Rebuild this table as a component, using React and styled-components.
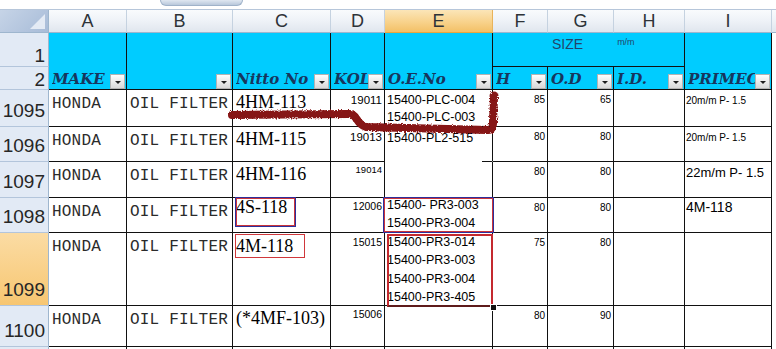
import React from 'react';
import styled, { createGlobalStyle, css } from 'styled-components';

const GlobalStyle = createGlobalStyle`
  html, body { margin: 0; padding: 0; background: #fff; }
  body { overflow: hidden; }
`;

const Page = styled.div`
  position: relative;
  width: 776px;
  height: 349px;
  overflow: hidden;
  background: #fff;
  font-family: "Liberation Sans", Arial, sans-serif;
`;

const Ribbon = styled.div`
  box-sizing: border-box;
  height: 10px;
  padding-left: 160px;
  border-bottom: 1px solid #b6c6da;
  display: flex;
  align-items: flex-start;
`;

const RibbonTab = styled.div`
  box-sizing: border-box;
  width: 83px;
  height: 6px;
  border: 1px solid #9fb2c9;
  border-top: none;
  border-radius: 0 0 6px 6px;
  background: linear-gradient(#dfe7f1, #b9c8db);
`;

const Sheet = styled.div`
  display: grid;
  grid-template-columns: 49px 78px 106px 98px 54px 108px 55px 66px 71px 87px 40px;
  grid-template-rows: 23px 34px 23px 37px 35px 36px 35px 73px 41px 30px;
`;

const Corner = styled.div`
  box-sizing: border-box;
  background: linear-gradient(135deg, #c6d4e7, #a8bcd8);
  border-right: 1px solid #9eb6ce;
  border-bottom: 1px solid #9eb6ce;
  display: flex;
  align-items: flex-end;
  justify-content: flex-end;
  padding: 0 3px 3px 0;
  &::after {
    content: '';
    border-left: 15px solid transparent;
    border-bottom: 15px solid #e4ebf5;
  }
`;

const ColHead = styled.div`
  box-sizing: border-box;
  border-right: 1px solid ${p => (p.$active ? '#e9b35a' : '#c5d2e0')};
  border-bottom: 1px solid ${p => (p.$active ? '#eaa63e' : '#9eb6ce')};
  background: ${p =>
    p.$active
      ? 'linear-gradient(#fbe5b8, #f8d48f 50%, #f3c066)'
      : 'linear-gradient(#f9fbfd, #eef2f7 50%, #e0e6ee)'};
  display: flex;
  align-items: center;
  justify-content: center;
  font: 18px/1 "Liberation Sans", Arial, sans-serif;
  color: #2e3338;
`;

const Band = styled.div`
  box-sizing: border-box;
  min-width: 0;
  grid-row: span ${p => p.$rows || 1};
  grid-column: span ${p => p.$cols || 1};
  background: #00ccff;
  border-right: 1px solid #111;
  border-bottom: 1px solid #111;
  display: flex;
  align-items: flex-end;
  padding: 0 1px 0 3px;
`;

const SizeBand = styled(Band)`
  align-items: flex-start;
  padding: 4px 0 0 59px;
  color: #234469;
`;

const SizeText = styled.span`
  font: 14px/1 "Liberation Sans", Arial, sans-serif;
`;

const UnitText = styled.span`
  margin-left: 34px;
  padding-top: 1px;
  font: 9px/1 "Liberation Sans", Arial, sans-serif;
`;

const BlankBand = styled.div`
  grid-row: span 2;
  background: #fff;
`;

const Label = styled.span`
  flex: 1;
  min-width: 0;
  overflow: hidden;
  white-space: nowrap;
  margin-bottom: 1px;
  font: italic bold 15px/17px "DejaVu Serif", "Liberation Serif", serif;
  color: #17365d;
`;

const Filter = styled.span`
  flex: none;
  box-sizing: border-box;
  width: 15px;
  height: 15px;
  border: 1px solid #b3b3b3;
  background: linear-gradient(#fefefe, #d8d8d8);
  display: flex;
  align-items: center;
  justify-content: center;
  &::after {
    content: '';
    margin-top: 2px;
    border-left: 3px solid transparent;
    border-right: 3px solid transparent;
    border-top: 3px solid #1e1e1e;
  }
`;

const RowHead = styled.div`
  box-sizing: border-box;
  background: ${p => (p.$active ? 'linear-gradient(#fbdca4, #f7c671)' : '#e2eaf5')};
  border-right: 1px solid #9eb6ce;
  border-bottom: 1px solid #b3c5db;
  display: flex;
  align-items: flex-end;
  justify-content: flex-end;
  padding: 0 3px ${p => p.$pb}px 0;
  font: 19px/19px "Liberation Sans", Arial, sans-serif;
  color: #262626;
`;

const Cell = styled.div`
  position: relative;
  box-sizing: border-box;
  min-width: 0;
  border-right: 1px solid #111;
  border-bottom: 1px solid ${p => (p.$open ? 'transparent' : '#111')};
  padding: ${p => p.$pt || 0}px ${p => p.$pr ?? 2}px 0 ${p => p.$pl ?? 3}px;
  text-align: ${p => (p.$right ? 'right' : 'left')};
  white-space: nowrap;
  color: #000;
  ${p =>
    p.$stub &&
    css`
      &::after {
        content: '';
        position: absolute;
        right: 0;
        bottom: -1px;
        width: 10px;
        height: 1px;
        background: #111;
      }
    `}
`;

const Spill = styled.div`
  background: #fff;
`;

const Mono = styled.div`
  font: 16px/16px "Liberation Mono", "Courier New", monospace;
  letter-spacing: 0.2px;
  color: #2b2b2b;
`;

const Roman = styled.div`
  font: 18px/18px "Liberation Serif", "Times New Roman", serif;
`;

const Small = styled.div`
  font: ${p => p.$size}px/1 "Liberation Sans", Arial, sans-serif;
`;

const Lines = styled.div`
  margin-top: ${p => p.$mt || 0}px;
  font: 12.5px/${p => p.$lh}px "Liberation Sans", Arial, sans-serif;
`;

const Mark = styled.div`
  position: absolute;
  z-index: 2;
  box-sizing: border-box;
  pointer-events: none;
  left: ${p => p.$x}px;
  top: ${p => p.$y}px;
  width: ${p => p.$w}px;
  height: ${p => p.$h}px;
  ${p =>
    p.$kind === 'double'
      ? css`
          border: 1px solid #2d2f9b;
          box-shadow: inset 0 0 0 1px #c9343b;
        `
      : p.$kind === 'heavy'
      ? css`
          border: 2px solid #c4292f;
          border-bottom-color: #5e1b1b;
        `
      : css`
          border: 1px solid #d0373b;
        `}
`;

const Handle = styled.span`
  position: absolute;
  right: -6px;
  bottom: -6px;
  width: 5px;
  height: 5px;
  background: #111;
  border: 1px solid #fff;
`;

const Ink = styled.svg`
  position: absolute;
  left: 0;
  top: 0;
  z-index: 5;
  pointer-events: none;
`;

const COLS = ['A', 'B', 'C', 'D', 'E', 'F', 'G', 'H', 'I'];

function HeadLabel({ text, filter = true }) {
  return (
    <>
      <Label>{text}</Label>
      {filter && <Filter />}
    </>
  );
}

function DataRow({
  num,
  active,
  model,
  modelPt = 3.2,
  modelMark,
  kol,
  kolSize = 10.5,
  kolPt = 3,
  oe = [],
  oeLh = 17,
  oePt = 2,
  oeMt,
  oeOpen,
  oeStub,
  oeMark,
  h,
  od,
  prime,
  primeSize = 10,
  primePt = 6,
}) {
  return (
    <>
      <RowHead $active={active} $pb={6}>{num}</RowHead>
      <Cell $pt={5.5} $pl={3}><Mono>{num ? 'HONDA' : ''}</Mono></Cell>
      <Cell $pt={5.5} $pl={3}><Mono>{num ? 'OIL FILTER' : ''}</Mono></Cell>
      <Cell $pt={modelPt} $pl={3}>
        <Roman>{model}</Roman>
        {modelMark}
      </Cell>
      <Cell $pt={kolPt} $right><Small $size={kolSize}>{kol}</Small></Cell>
      <Cell $pt={oePt} $pl={2} $open={oeOpen} $stub={oeStub}>
        <Lines $lh={oeLh} $mt={oeMt}>
          {oe.map(line => (
            <div key={line}>{line}</div>
          ))}
        </Lines>
        {oeMark}
      </Cell>
      <Cell $pt={4.5} $right><Small $size={10}>{h}</Small></Cell>
      <Cell $pt={4.5} $right><Small $size={10}>{od}</Small></Cell>
      <Cell />
      <Cell $pt={primePt} $pl={1}><Small $size={primeSize}>{prime}</Small></Cell>
      <Spill />
    </>
  );
}

export default function App() {
  return (
    <Page>
      <GlobalStyle />
      <Ribbon>
        <RibbonTab />
      </Ribbon>
      <Sheet>
        <Corner />
        {COLS.map(c => (
          <ColHead key={c} $active={c === 'E'}>{c}</ColHead>
        ))}
        <ColHead />

        <RowHead $pb={1}>1</RowHead>
        <Band $rows={2}><HeadLabel text="MAKE" /></Band>
        <Band $rows={2}><HeadLabel text="" /></Band>
        <Band $rows={2}><HeadLabel text="Nitto No" /></Band>
        <Band $rows={2}><HeadLabel text="KOL" /></Band>
        <Band $rows={2}><HeadLabel text="O.E.No" /></Band>
        <SizeBand $cols={3}>
          <SizeText>SIZE</SizeText>
          <UnitText>m/m</UnitText>
        </SizeBand>
        <Band $rows={2}><HeadLabel text="PRIMEC" /></Band>
        <BlankBand />

        <RowHead $pb={0}>2</RowHead>
        <Band><HeadLabel text="H" /></Band>
        <Band><HeadLabel text="O.D" /></Band>
        <Band><HeadLabel text="I.D." /></Band>

        <DataRow
          num="1095"
          model="4HM-113"
          kol="19011"
          kolSize={11.5}
          kolPt={5.3}
          oe={['15400-PLC-004', '15400-PLC-003']}
          h="85"
          od="65"
          prime="20m/m P- 1.5"
        />
        <DataRow
          num="1096"
          model="4HM-115"
          kol="19013"
          kolSize={11.5}
          kolPt={5}
          oe={['15400-PL2-515']}
          oePt={3}
          oeOpen
          oeStub
          h="80"
          od="80"
          prime="20m/m P- 1.5"
        />
        <DataRow
          num="1097"
          model="4HM-116"
          kol="19014"
          kolSize={9.5}
          kolPt={3}
          h="80"
          od="80"
          prime="22m/m P- 1.5"
          primeSize={13}
          primePt={4}
        />
        <DataRow
          num="1098"
          model="4S-118"
          modelPt={0.2}
          modelMark={<Mark $kind="double" $x={2} $y={-1} $w={61} $h={30} />}
          kol="12006"
          kolPt={3}
          oe={['15400- PR3-003', '15400-PR3-004']}
          oeLh={18}
          oePt={0}
          oeMt={-2}
          oeMark={<Mark $kind="double" $x={-2} $y={-1} $w={111} $h={36} />}
          h="80"
          od="80"
          prime="4M-118"
          primeSize={14}
          primePt={2}
        />
        <DataRow
          num="1099"
          active
          model="4M-118"
          modelPt={3.6}
          modelMark={<Mark $x={2} $y={1} $w={70} $h={24} />}
          kol="15015"
          kolPt={4}
          oe={['15400-PR3-014', '15400-PR3-003', '15400-PR3-004', '15400-PR3-405']}
          oeLh={18.3}
          oePt={0}
          oeMark={
            <Mark $kind="heavy" $x={2} $y={1} $w={106} $h={73}>
              <Handle />
            </Mark>
          }
          h="75"
          od="80"
        />
        <DataRow
          num="1100"
          model="(*4MF-103)"
          modelPt={3}
          kol="15006"
          kolPt={3}
          h="80"
          od="90"
        />
        <DataRow num="" />
      </Sheet>

      <Ink width="776" height="349" viewBox="0 0 776 349">
        <defs>
          <filter id="rough" x="-10%" y="-10%" width="120%" height="120%">
            <feTurbulence type="fractalNoise" baseFrequency="0.8" numOctaves="2" result="noise" />
            <feDisplacementMap in="SourceGraphic" in2="noise" scale="4" />
          </filter>
        </defs>
        <g filter="url(#rough)">
          <path
            d="M232 115 L350 114 C357 114 356 124 366 127 L488 130 C492 130 493 127 493 122 L494 97"
            fill="none"
            stroke="#861212"
            strokeWidth="8"
            strokeLinecap="round"
            strokeLinejoin="round"
          />
          <circle cx="494" cy="96" r="4.5" fill="#861212" />
        </g>
      </Ink>
    </Page>
  );
}
